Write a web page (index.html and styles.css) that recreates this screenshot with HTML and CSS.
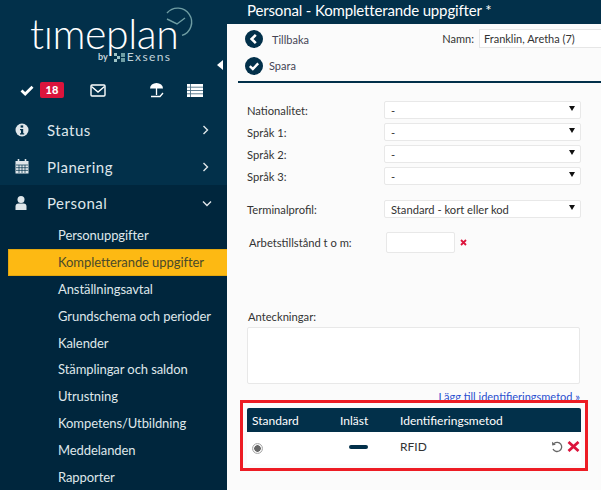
FILE: index.html
```html
<!DOCTYPE html>
<html>
<head>
    <title>Personal - Kompletterande uppgifter</title>
    <link rel="stylesheet" href="styles.css">
</head>
<body>
<div class="app">
    <div class="sidebar">
        <div class="logo">
            <svg class="logo-clock" width="32" height="32" viewBox="0 0 32 32">
                <path d="M5 7 A14 14 0 1 1 20 29.4" fill="none" stroke="#6f9da3" stroke-width="1.4"/>
                <path d="M5 13 L15 18 L23 12" fill="none" stroke="#6f9da3" stroke-width="1.4"/>
            </svg>
            <div class="logo-name">tımeplan</div>
            <div class="logo-by"><span class="by">by</span>
                <svg width="11" height="9" viewBox="0 0 11 9"><rect x="0" y="0" width="3" height="3" fill="#9fc3c6"/><rect x="3" y="3" width="3" height="3" fill="#9fc3c6"/><rect x="0" y="6" width="3" height="3" fill="#9fc3c6"/><rect x="7" y="0" width="4" height="4" fill="#6f9da3"/><rect x="7" y="5" width="4" height="4" fill="#6f9da3"/></svg>
                <span class="exsens">Exsens</span>
            </div>
            <div class="collapse"></div>
        </div>
        <div class="quick">
            <div class="quick-check">
                <svg width="14" height="11" viewBox="0 0 14 11"><path d="M1.5 5.5 L5.2 9 L12.5 1.8" fill="none" stroke="#fff" stroke-width="2.8"/></svg>
                <span class="badge">18</span>
            </div>
            <svg class="quick-mail" width="16" height="13" viewBox="0 0 16 13"><rect x="1" y="1" width="14" height="11" rx="1" fill="none" stroke="#fff" stroke-width="1.4"/><path d="M1.5 2.5 L8 8 L14.5 2.5" fill="none" stroke="#fff" stroke-width="1.4"/></svg>
            <svg class="quick-beach" width="16" height="16" viewBox="0 0 16 16"><path d="M1 6.5 A6.5 5.5 0 0 1 14 6.5 Z" fill="#fff"/><path d="M7.5 6 V13" stroke="#fff" stroke-width="1.3"/><path d="M2 14.5 H11 L14 11" fill="none" stroke="#fff" stroke-width="1.3"/></svg>
            <svg class="quick-list" width="16" height="13" viewBox="0 0 16 13"><rect width="16" height="13" fill="#fff"/><path d="M0 3.2 H16 M0 6.5 H16 M0 9.8 H16" stroke="#4d6f86" stroke-width="0.9"/><path d="M3.5 0 V13" stroke="#4d6f86" stroke-width="0.9"/></svg>
        </div>
        <div class="menu-item">
            <span class="menu-icon"><svg width="14" height="14" viewBox="0 0 14 14"><circle cx="7" cy="7" r="6.5" fill="#dfe6ea"/><rect x="5.6" y="2.4" width="2.6" height="2.2" fill="#02304a"/><path d="M5 6 H8.2 V10.2 H9.2 V11.4 H5 V10.2 H6 V7.2 H5 Z" fill="#02304a"/></svg></span>
            <span class="menu-label">Status</span>
            <svg class="menu-arrow" width="7" height="10" viewBox="0 0 7 10"><path d="M1.5 1 L5.5 5 L1.5 9" fill="none" stroke="#dfe6ea" stroke-width="1.4"/></svg>
        </div>
        <div class="menu-item menu-planning">
            <span class="menu-icon"><svg width="14" height="15" viewBox="0 0 14 15"><rect x="0.5" y="2" width="13" height="12.5" fill="#dfe6ea"/><path d="M3.5 0 V3 M10.5 0 V3" stroke="#dfe6ea" stroke-width="1.6"/><path d="M1 6 H13 M1 8.7 H13 M1 11.4 H13 M4 6 V14 M7 6 V14 M10 6 V14" stroke="#02304a" stroke-width="0.7"/></svg></span>
            <span class="menu-label">Planering</span>
            <svg class="menu-arrow" width="7" height="10" viewBox="0 0 7 10"><path d="M1.5 1 L5.5 5 L1.5 9" fill="none" stroke="#dfe6ea" stroke-width="1.4"/></svg>
        </div>
        <div class="personal">
            <div class="menu-item">
                <span class="menu-icon"><svg width="12" height="14" viewBox="0 0 12 14"><circle cx="6" cy="3.6" r="3.5" fill="#dfe6ea"/><path d="M0.5 14 V10.5 Q0.5 7.5 3.5 7.5 H8.5 Q11.5 7.5 11.5 10.5 V14 Z" fill="#dfe6ea"/></svg></span>
                <span class="menu-label">Personal</span>
                <svg class="menu-arrow menu-arrow-open" width="10" height="7" viewBox="0 0 10 7"><path d="M1 1.5 L5 5.5 L9 1.5" fill="none" stroke="#dfe6ea" stroke-width="1.4"/></svg>
            </div>
            <div class="sub-list">
                <a class="sub-item">Personuppgifter</a>
                <a class="sub-item active">Kompletterande uppgifter</a>
                <a class="sub-item">Anställningsavtal</a>
                <a class="sub-item">Grundschema och perioder</a>
                <a class="sub-item">Kalender</a>
                <a class="sub-item">Stämplingar och saldon</a>
                <a class="sub-item">Utrustning</a>
                <a class="sub-item">Kompetens/Utbildning</a>
                <a class="sub-item">Meddelanden</a>
                <a class="sub-item">Rapporter</a>
            </div>
        </div>
    </div>
    <div class="main">
        <div class="title">Personal - Kompletterande uppgifter *</div>
        <div class="toolbar">
            <div class="tool-row">
                <div class="tool tool-back">
                    <svg width="18" height="18" viewBox="0 0 18 18"><circle cx="9" cy="9" r="9" fill="#02304a"/><path d="M10.8 4.8 L6.6 9 L10.8 13.2" fill="none" stroke="#fff" stroke-width="2.6"/></svg>
                    <span>Tillbaka</span>
                </div>
                <div class="name-field">
                    <span>Namn:</span>
                    <div class="name-input">Franklin, Aretha (7)</div>
                </div>
            </div>
            <div class="tool tool-save">
                <svg width="18" height="18" viewBox="0 0 18 18"><circle cx="9" cy="9" r="9" fill="#02304a"/><path d="M4.8 9.2 L7.8 12 L13.2 6.4" fill="none" stroke="#fff" stroke-width="2.4"/></svg>
                <span>Spara</span>
            </div>
        </div>
        <div class="form">
            <div class="field-row"><label>Nationalitet:</label><div class="select">-</div></div>
            <div class="field-row"><label>Språk 1:</label><div class="select">-</div></div>
            <div class="field-row"><label>Språk 2:</label><div class="select">-</div></div>
            <div class="field-row"><label>Språk 3:</label><div class="select">-</div></div>
            <div class="field-row terminal"><label>Terminalprofil:</label><div class="select">Standard - kort eller kod</div></div>
            <div class="permit"><label>Arbetstillstånd t o m:</label><div class="date-input"></div>
                <svg width="7" height="7" viewBox="0 0 7 7"><path d="M1 1 L6 6 M6 1 L1 6" stroke="#dc143c" stroke-width="1.8"/></svg>
            </div>
            <div class="notes">
                <label>Anteckningar:</label>
                <div class="textarea"></div>
            </div>
            <a class="add-link">Lägg till identifieringsmetod »</a>
            <div class="id-table">
                <div class="id-head">
                    <span class="col-std">Standard</span>
                    <span class="col-read">Inläst</span>
                    <span>Identifieringsmetod</span>
                </div>
                <div class="id-row">
                    <span class="col-std"><span class="radio"></span></span>
                    <span class="col-read"><span class="dash"></span></span>
                    <span class="col-method">RFID</span>
                    <svg width="12" height="12" viewBox="0 0 12 12"><path d="M3 2.5 A4.6 4.6 0 1 1 2 8" fill="none" stroke="#666" stroke-width="1.3"/><path d="M1 0.8 L1.2 4.4 L4.8 3.8 Z" fill="#666"/></svg>
                    <svg class="row-delete" width="13" height="11" viewBox="0 0 13 11"><path d="M1.5 1 L11.5 10 M11.5 1 L1.5 10" stroke="#dc143c" stroke-width="2.8"/></svg>
                </div>
            </div>
        </div>
        <div class="highlight"></div>
    </div>
</div>
</body>
</html>
```

FILE: styles.css
```css
* {
    box-sizing: border-box;
}
body {
    margin: 0;
    font-family: Lato, "Open Sans", sans-serif;
    color: #333;
    background-color: #fbfbfb;
}
.app {
    display: flex;
    width: 601px;
    height: 490px;
    overflow: hidden;
}
.sidebar {
    width: 227px;
    flex-shrink: 0;
    background-color: #02304a;
    color: #dfe6ea;
}
.logo {
    position: relative;
    height: 75px;
    padding: 17px 0 0 30px;
    color: #fff;
}
.logo-clock {
    position: absolute;
    left: 162px;
    top: 6px;
}
.logo-name {
    height: 35px;
    font-size: 41px;
    font-weight: 300;
    line-height: 34px;
    letter-spacing: -0.4px;
}
.logo-by {
    display: flex;
    align-items: center;
    gap: 2px;
    margin: 0 0 0 68px;
    line-height: 10px;
    color: #c4d3da;
}
.by {
    font-size: 9px;
    font-weight: 700;
    margin-right: 4px;
}
.exsens {
    font-size: 12px;
    letter-spacing: 1.4px;
}
.collapse {
    position: absolute;
    left: 217px;
    top: 60px;
    width: 0;
    height: 0;
    border-style: solid;
    border-width: 5.5px 6px 5.5px 0;
    border-color: transparent #fff transparent transparent;
}
.quick {
    display: flex;
    align-items: center;
    height: 30px;
    margin-bottom: 7px;
    padding-left: 20px;
}
.quick-check {
    display: flex;
    align-items: center;
    gap: 6px;
    width: 70px;
}
.badge {
    width: 24px;
    height: 16px;
    border-radius: 2px;
    background-color: #dc143c;
    color: #fff;
    font-size: 11px;
    font-weight: 900;
    line-height: 16px;
    text-align: center;
}
.quick-mail {
    margin-right: 43px;
}
.quick-beach {
    margin-right: 22px;
}
.menu-item {
    display: flex;
    align-items: center;
    height: 36px;
    padding-left: 15px;
}
.menu-planning {
    height: 37px;
}
.menu-icon {
    display: flex;
    width: 32px;
    flex-shrink: 0;
}
.menu-label {
    font-size: 15px;
    letter-spacing: 0.5px;
}
.menu-arrow {
    margin-left: auto;
    margin-right: 18px;
}
.menu-arrow-open {
    margin-right: 15px;
}
.personal {
    height: 305px;
    background-color: #00263d;
}
.sub-list {
    display: flex;
    flex-direction: column;
    padding-top: 1px;
    padding-left: 8px;
}
.sub-item {
    height: 26.9px;
    padding-left: 50px;
    font-size: 13px;
    line-height: 27px;
    letter-spacing: -0.08px;
    color: #dfe6ea;
}
.sub-item.active {
    background-color: #fdb913;
    border: 1px solid #e4a70f;
    border-right: none;
    padding-left: 49px;
    line-height: 25px;
    color: #4a4a2a;
}
.main {
    position: relative;
    flex: 1;
    min-width: 0;
}
.title {
    height: 24px;
    padding-left: 20px;
    background-color: #02304a;
    color: #fff;
    font-size: 15px;
    line-height: 21px;
    letter-spacing: -0.15px;
}
.toolbar {
    margin-left: 11px;
    height: 59px;
    border-bottom: 2px solid #02304a;
    font-size: 11px;
    color: #445;
}
.tool-row {
    display: flex;
    justify-content: space-between;
    height: 28px;
}
.tool {
    display: flex;
    align-items: center;
    gap: 8px;
    height: 27px;
}
.tool-back {
    gap: 9px;
    padding-top: 3px;
    margin-left: 7px;
}
.tool-save {
    gap: 6px;
    margin-left: 7px;
}
.name-field {
    display: flex;
    align-items: center;
    gap: 5px;
    padding-top: 1px;
    color: #333;
    font-size: 11px;
}
.name-input {
    width: 122px;
    height: 19px;
    padding-left: 4px;
    border: 1px solid #e6e6e6;
    border-right: none;
    background-color: #fff;
    line-height: 17px;
}
.form {
    padding: 18px 20px 0 20px;
    font-size: 11.2px;
}
.field-row {
    display: flex;
    align-items: center;
    height: 18px;
    margin-bottom: 4px;
}
.field-row label {
    width: 137px;
    padding-top: 1px;
}
.terminal {
    margin-top: 15px;
}
.select {
    position: relative;
    width: 197px;
    height: 18px;
    padding-left: 6px;
    border: 1px solid #e8e8e8;
    border-radius: 2px;
    background-color: #fff;
    line-height: 17px;
}
.select::after {
    content: "";
    position: absolute;
    right: 5px;
    top: 4px;
    border-style: solid;
    border-width: 5px 3px 0 3px;
    border-color: #111 transparent transparent transparent;
}
.permit {
    display: flex;
    align-items: center;
    margin: 14px 0 0 2px;
}
.permit label {
    width: 137px;
}
.date-input {
    width: 69px;
    height: 21px;
    margin-right: 5px;
    border: 1px solid #e8e8e8;
    border-radius: 2px;
    background-color: #fff;
}
.notes {
    margin-top: 56px;
}
.notes label {
    display: block;
    padding-left: 1px;
    line-height: 16px;
    margin-bottom: 2px;
}
.textarea {
    width: 333px;
    height: 57px;
    border: 1px solid #e8e8e8;
    border-radius: 2px;
    background-color: #fff;
}
.add-link {
    display: block;
    width: 333px;
    margin-top: 6px;
    color: #2a4fd0;
    font-size: 11px;
    line-height: 14px;
    text-align: right;
    text-decoration: underline;
}
.id-table {
    width: 334px;
    margin-top: 4px;
    font-size: 12px;
}
.id-head {
    display: flex;
    align-items: center;
    height: 24px;
    padding-left: 5px;
    border-radius: 2px 2px 0 0;
    background-color: #02304a;
    color: #fff;
}
.col-std {
    width: 88px;
}
.col-read {
    width: 60px;
}
.id-row {
    display: flex;
    align-items: center;
    height: 32px;
    padding-left: 5px;
    padding-bottom: 3px;
    background-color: #fff;
}
.radio {
    display: block;
    width: 11px;
    height: 11px;
    margin-top: 3px;
    border: 1px solid #aaa;
    border-radius: 50%;
    background: radial-gradient(circle, #666 0 3px, #f2f2f2 3.5px);
}
.dash {
    display: block;
    width: 19px;
    height: 4px;
    margin: 1px 0 0 9px;
    border-radius: 2px;
    background-color: #02304a;
}
.col-method {
    flex: 1;
    padding-bottom: 1px;
}
.row-delete {
    margin: 0 1px 0 4px;
}
.highlight {
    position: absolute;
    left: 13px;
    top: 400px;
    width: 348px;
    height: 71px;
    border: 3px solid #ed1c24;
}
```
